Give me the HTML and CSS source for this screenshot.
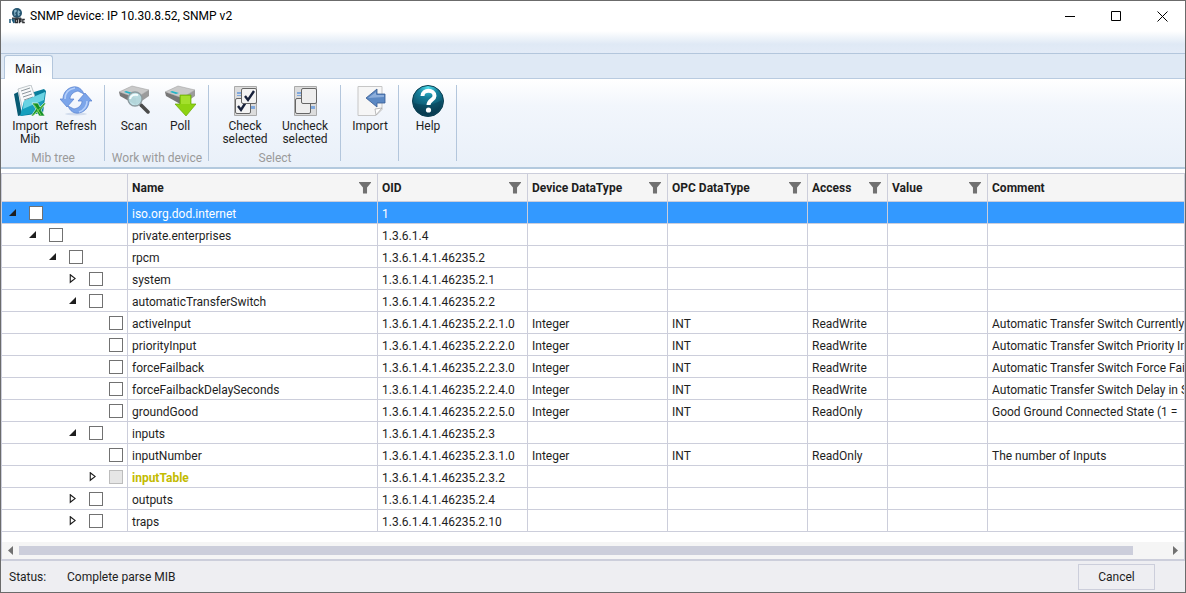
FILE: index.html
```html
<!DOCTYPE html>
<html lang="en">
<head>
  <meta charset="UTF-8">
  <meta name="viewport" content="width=device-width, initial-scale=1.0">
  <title>SNMP device</title>
  <link rel="stylesheet" href="styles.css">
</head>
<body>
  <div class="window">
    <header class="titlebar">
      <svg class="app-icon" width="16" height="16" viewBox="0 0 16 16">
        <circle cx="8" cy="5" r="5" fill="#24546f"/>
        <path d="M5 2.500l2-1 1 1.500-2 2 1 2-1.500 1zM9 2l2.500 2-1.500 1.500 1 1.500-2 1-.5-3z" fill="#86b3c7"/>
        <path d="M3 9.500h9l1 2H3z" fill="#3c444b"/>
        <path d="M1 11v4M3 11l2 4V11" fill="none" stroke="#1d5878" stroke-width="1.500"/>
        <path d="M6.500 11.500h2v3h-2zM10.500 15.200v-3.700h1.500v2h-1.500M15.800 11.500h-2v3h2" fill="none" stroke="#2c2f33" stroke-width="1.300"/>
      </svg>
      <h1>SNMP device: IP 10.30.8.52, SNMP v2</h1>
      <div class="window-buttons">
        <button aria-label="Minimize"><svg width="11" height="11"><path d="M0 5.500h10" stroke="#000"/></svg></button>
        <button aria-label="Maximize"><svg width="11" height="11"><path d="M.5 .5h9v9h-9z" fill="none" stroke="#000"/></svg></button>
        <button aria-label="Close"><svg width="11" height="11"><path d="M.5 .5l10 10M10.500 .5l-10 10" stroke="#000"/></svg></button>
      </div>
    </header>
    <div class="quickbar"></div>
    <nav class="tabs">
      <button class="tab">Main</button>
    </nav>

    <div class="ribbon">
      <section class="group">
        <div class="tools">
          <button class="tool">
            <svg width="32" height="32" viewBox="0 0 32 32">
              <path d="M0 9l4-2 4 23-4 1z" fill="#075a73"/>
              <path d="M10 10l20-6 2 2-3 22-22 3z" fill="#087e9c"/>
              <path d="M4 4L17 0l6 17-14 9z" fill="#f7f9fa" stroke="#9aa4aa" stroke-width=".6"/>
              <path d="M7 6l9-3M8 9l9-3M9 12l9-3M10 15l9-3M11 18l7-2" stroke="#7f8a91" stroke-width=".9"/>
              <path d="M10 16l21-9-3 19-22 5z" fill="#159fbd"/>
              <path d="M10 16l21-9-1 8-21 9z" fill="#69d3e3"/>
              <path d="M18 18h6l2 4 4-4h2l-5 7 4 6h-6l-2-4-4 4h-2l5-7z" fill="#149026" stroke="#fff" stroke-width=".6"/>
              <path d="M20 19.500l7 10.500M30 19.500L19 30.500" stroke="#7fd65a" stroke-width="1"/>
            </svg>
            <span>Import Mib</span>
          </button>
          <button class="tool">
            <svg width="32" height="32" viewBox="0 0 32 32">
              <ellipse cx="16" cy="29" rx="11" ry="1.500" fill="#d3dded"/>
              <path d="M13 2C7 3 3 8 3 14H0l7 8 7-8h-4c0-4 3-7 8-8l6 3c-2-5-6-8-11-7z" fill="#7ba5ea" stroke="#5680cf" stroke-width=".7"/>
              <path d="M19 28c6-1 10-6 10-12h3l-7-8-7 8h4c0 4-3 7-8 8l-6-3c2 5 6 8 11 7z" fill="#7ba5ea" stroke="#5680cf" stroke-width=".7"/>
              <path d="M5 14c0-6 4-10 10-11M27 16c0 5-3 9-8 11" fill="none" stroke="#b5cffa" stroke-width="1.500"/>
            </svg>
            <span>Refresh</span>
          </button>
        </div>
        <h2>Mib tree</h2>
      </section>

      <section class="group">
        <div class="tools">
          <button class="tool">
            <svg width="32" height="32" viewBox="0 0 32 32">
              <path d="M1 7L14 1l17 4-13 8z" fill="#c9c9c9" stroke="#999" stroke-width=".5"/>
              <path d="M1 7l17 6v7L2 11z" fill="#777"/>
              <path d="M18 13l13-8v6l-13 9z" fill="#9b9b9b"/>
              <path d="M8 6l7 2-3 1-6-2z" fill="#20b4c8"/>
              <path d="M23 20l7 7" stroke="#4b4b4b" stroke-width="3.500" stroke-linecap="round"/>
              <circle cx="17" cy="14" r="7" fill="#b9dfe4" fill-opacity=".9" stroke="#8d9ba0" stroke-width="1.300"/>
              <path d="M12 14c1-4 4-5 8-4" fill="none" stroke="#f4fcfd" stroke-width="2"/>
            </svg>
            <span>Scan</span>
          </button>
          <button class="tool">
            <svg width="32" height="32" viewBox="0 0 32 32">
              <path d="M1 7L14 1l17 4-13 8z" fill="#c9c9c9" stroke="#999" stroke-width=".5"/>
              <path d="M1 7l17 6v7L2 11z" fill="#777"/>
              <path d="M18 13l13-8v6l-13 9z" fill="#9b9b9b"/>
              <path d="M8 6l7 2-3 1-6-2z" fill="#20b4c8"/>
              <path d="M16 10h11v9h5L22 31 11 19h5z" fill="#8ed312" stroke="#67a806" stroke-width=".7"/>
              <path d="M17 11h9v8h-9z" fill="#a3e02c"/>
            </svg>
            <span>Poll</span>
          </button>
        </div>
        <h2>Work with device</h2>
      </section>

      <section class="group">
        <div class="tools">
          <button class="tool wide">
            <svg width="32" height="32" viewBox="0 0 32 32">
              <path d="M5.500 1.500h22v29h-22z" fill="#dcdcdc" stroke="#aaa"/>
              <path d="M8 7h4v2H8zM8 10h4v1H8zM22 21h4v3h-4z" fill="#7fa8de"/>
              <rect x="6.500" y="13.500" width="15" height="15" rx="1.500" fill="#f3f3f3" stroke="#666"/>
              <path d="M9 21l3 4 5-8" fill="none" stroke="#17213b" stroke-width="2.400"/>
              <rect x="12.500" y="3.500" width="15" height="15" rx="1.500" fill="#f3f3f3" stroke="#666"/>
              <path d="M16 11l3 4 6-9" fill="none" stroke="#17213b" stroke-width="2.400"/>
            </svg>
            <span>Check selected</span>
          </button>
          <button class="tool wide">
            <svg width="32" height="32" viewBox="0 0 32 32">
              <path d="M5.500 1.500h22v29h-22z" fill="#dcdcdc" stroke="#aaa"/>
              <path d="M8 7h4v2H8zM8 10h4v1H8zM22 21h4v3h-4z" fill="#7fa8de"/>
              <rect x="6.500" y="13.500" width="15" height="15" rx="1.500" fill="#eee" stroke="#666"/>
              <rect x="12.500" y="3.500" width="15" height="15" rx="1.500" fill="#eee" stroke="#666"/>
            </svg>
            <span>Uncheck selected</span>
          </button>
        </div>
        <h2>Select</h2>
      </section>

      <section class="group">
        <div class="tools">
          <button class="tool">
            <svg width="32" height="32" viewBox="0 0 32 32">
              <path d="M4 1.500h24v23l-6 6H4z" fill="#f6f6f6" stroke="#c6c6c6"/>
              <path d="M28 23l-6 7-1-6z" fill="#fff" stroke="#aaa" stroke-width=".8"/>
              <path d="M12 13l11-9v5h8v9h-8v4z" fill="#5b88c3" stroke="#365a92" stroke-width=".8"/>
              <path d="M14 13l8-6v3h8v2z" fill="#8daedb"/>
            </svg>
            <span>Import</span>
          </button>
        </div>
      </section>

      <section class="group">
        <div class="tools">
          <button class="tool">
            <svg width="32" height="32" viewBox="0 0 32 32">
              <defs>
                <radialGradient id="ball" cx=".5" cy=".05" r=".85">
                  <stop offset="0" stop-color="#4fe0ee"/>
                  <stop offset=".4" stop-color="#157f9b"/>
                  <stop offset="1" stop-color="#0a4258"/>
                </radialGradient>
              </defs>
              <circle cx="16" cy="16" r="15.500" fill="url(#ball)" stroke="#0b3e50"/>
              <path d="M2 18c9 3 20 2 28-3 0 19-27 20-28 3z" fill="#063044" fill-opacity=".35"/>
              <path d="M10.500 11c0-7 12-7 12 0 0 4-6 4-6 9" fill="none" stroke="#fff" stroke-width="4"/>
              <circle cx="16.500" cy="25" r="2.600" fill="#fff"/>
            </svg>
            <span>Help</span>
          </button>
        </div>
      </section>
    </div>

    <main class="grid">
      <table>
        <colgroup>
          <col class="col-tree"><col class="col-name"><col class="col-oid"><col class="col-type"><col class="col-type"><col class="col-access"><col class="col-value"><col>
        </colgroup>
        <thead>
          <tr>
            <th></th>
            <th><div class="head">Name<button class="filter" aria-label="Filter name"></button></div></th>
            <th><div class="head">OID<button class="filter" aria-label="Filter OID"></button></div></th>
            <th><div class="head">Device DataType<button class="filter" aria-label="Filter device type"></button></div></th>
            <th><div class="head">OPC DataType<button class="filter" aria-label="Filter OPC type"></button></div></th>
            <th><div class="head">Access<button class="filter" aria-label="Filter access"></button></div></th>
            <th><div class="head">Value<button class="filter" aria-label="Filter value"></button></div></th>
            <th><div class="head">Comment</div></th>
          </tr>
        </thead>
        <tbody>
          <tr class="selected">
            <td><div class="node level-0"><button class="arrow open" aria-label="Collapse"></button><input type="checkbox" aria-label="iso.org.dod.internet"></div></td>
            <td>iso.org.dod.internet</td><td>1</td><td></td><td></td><td></td><td></td><td></td>
          </tr>
          <tr>
            <td><div class="node level-1"><button class="arrow open" aria-label="Collapse"></button><input type="checkbox" aria-label="private.enterprises"></div></td>
            <td>private.enterprises</td><td>1.3.6.1.4</td><td></td><td></td><td></td><td></td><td></td>
          </tr>
          <tr>
            <td><div class="node level-2"><button class="arrow open" aria-label="Collapse"></button><input type="checkbox" aria-label="rpcm"></div></td>
            <td>rpcm</td><td>1.3.6.1.4.1.46235.2</td><td></td><td></td><td></td><td></td><td></td>
          </tr>
          <tr>
            <td><div class="node level-3"><button class="arrow" aria-label="Expand"></button><input type="checkbox" aria-label="system"></div></td>
            <td>system</td><td>1.3.6.1.4.1.46235.2.1</td><td></td><td></td><td></td><td></td><td></td>
          </tr>
          <tr>
            <td><div class="node level-3"><button class="arrow open" aria-label="Collapse"></button><input type="checkbox" aria-label="automaticTransferSwitch"></div></td>
            <td>automaticTransferSwitch</td><td>1.3.6.1.4.1.46235.2.2</td><td></td><td></td><td></td><td></td><td></td>
          </tr>
          <tr>
            <td><div class="node level-4"><input type="checkbox" aria-label="activeInput"></div></td>
            <td>activeInput</td><td>1.3.6.1.4.1.46235.2.2.1.0</td><td>Integer</td><td>INT</td><td>ReadWrite</td><td></td><td>Automatic Transfer Switch Currently</td>
          </tr>
          <tr>
            <td><div class="node level-4"><input type="checkbox" aria-label="priorityInput"></div></td>
            <td>priorityInput</td><td>1.3.6.1.4.1.46235.2.2.2.0</td><td>Integer</td><td>INT</td><td>ReadWrite</td><td></td><td>Automatic Transfer Switch Priority In</td>
          </tr>
          <tr>
            <td><div class="node level-4"><input type="checkbox" aria-label="forceFailback"></div></td>
            <td>forceFailback</td><td>1.3.6.1.4.1.46235.2.2.3.0</td><td>Integer</td><td>INT</td><td>ReadWrite</td><td></td><td>Automatic Transfer Switch Force Failb</td>
          </tr>
          <tr>
            <td><div class="node level-4"><input type="checkbox" aria-label="forceFailbackDelaySeconds"></div></td>
            <td>forceFailbackDelaySeconds</td><td>1.3.6.1.4.1.46235.2.2.4.0</td><td>Integer</td><td>INT</td><td>ReadWrite</td><td></td><td>Automatic Transfer Switch Delay in S</td>
          </tr>
          <tr>
            <td><div class="node level-4"><input type="checkbox" aria-label="groundGood"></div></td>
            <td>groundGood</td><td>1.3.6.1.4.1.46235.2.2.5.0</td><td>Integer</td><td>INT</td><td>ReadOnly</td><td></td><td>Good Ground Connected State (1 =</td>
          </tr>
          <tr>
            <td><div class="node level-3"><button class="arrow open" aria-label="Collapse"></button><input type="checkbox" aria-label="inputs"></div></td>
            <td>inputs</td><td>1.3.6.1.4.1.46235.2.3</td><td></td><td></td><td></td><td></td><td></td>
          </tr>
          <tr>
            <td><div class="node level-4"><input type="checkbox" aria-label="inputNumber"></div></td>
            <td>inputNumber</td><td>1.3.6.1.4.1.46235.2.3.1.0</td><td>Integer</td><td>INT</td><td>ReadOnly</td><td></td><td>The number of Inputs</td>
          </tr>
          <tr>
            <td><div class="node level-4"><button class="arrow" aria-label="Expand"></button><input type="checkbox" aria-label="inputTable" disabled></div></td>
            <td class="table-node">inputTable</td><td>1.3.6.1.4.1.46235.2.3.2</td><td></td><td></td><td></td><td></td><td></td>
          </tr>
          <tr>
            <td><div class="node level-3"><button class="arrow" aria-label="Expand"></button><input type="checkbox" aria-label="outputs"></div></td>
            <td>outputs</td><td>1.3.6.1.4.1.46235.2.4</td><td></td><td></td><td></td><td></td><td></td>
          </tr>
          <tr>
            <td><div class="node level-3"><button class="arrow" aria-label="Expand"></button><input type="checkbox" aria-label="traps"></div></td>
            <td>traps</td><td>1.3.6.1.4.1.46235.2.10</td><td></td><td></td><td></td><td></td><td></td>
          </tr>
        </tbody>
      </table>
      <div class="scrollbar">
        <button class="scroll-left" aria-label="Scroll left"></button>
        <div class="track"><div class="thumb"></div></div>
        <button class="scroll-right" aria-label="Scroll right"></button>
      </div>
    </main>

    <footer class="status">
      <span class="status-label">Status:</span>
      <span>Complete parse MIB</span>
      <button class="cancel">Cancel</button>
    </footer>
  </div>
</body>
</html>
```
FILE: styles.css
```css
* {
  box-sizing: border-box;
}

body {
  margin: 0;
  font-family: Roboto, "Open Sans", sans-serif;
  font-size: 12px;
  line-height: 16px;
  color: #1e1e1e;
}

button {
  font: inherit;
  color: inherit;
  background: none;
  border: none;
  padding: 0;
}

.window {
  min-height: 100vh;
  display: flex;
  flex-direction: column;
  border: 1px solid #6b6b6b;
  background: #fff;
}

/* title bar */
.titlebar {
  display: flex;
  align-items: center;
  height: 30px;
  padding-left: 8px;
  color: #000;
}

.titlebar h1 {
  margin: 0 0 0 5px;
  font-size: 12px;
  font-weight: normal;
}

.window-buttons {
  display: flex;
  margin-left: auto;
}

.window-buttons button {
  width: 46px;
  height: 28px;
}

.window-buttons svg {
  display: block;
  margin: auto;
}

.quickbar {
  height: 23px;
  background: linear-gradient(#fff, #dfe9f5 60%, #e3ebf7);
  border-bottom: 1px solid #b3c6dc;
}

.tabs {
  display: flex;
  align-items: flex-end;
  height: 25px;
  padding-left: 3px;
  background: #dfe9f5;
  border-bottom: 1px solid #b9cbe0;
}

.tab {
  height: 24px;
  margin-bottom: -1px;
  padding: 2px 10px 0;
  border: 1px solid #b3c6dc;
  border-bottom: none;
  border-radius: 3px 3px 0 0;
  background: linear-gradient(#f3f8fd, #fff);
}

/* ribbon */
.ribbon {
  display: flex;
  height: 90px;
  padding: 6px 0;
  background: linear-gradient(#fff, #f2f6fc 30%, #e9f0f9);
  border-bottom: 2px solid #b3c9de;
}

.group {
  display: flex;
  flex-direction: column;
  justify-content: space-between;
  padding: 0 5px 0 6px;
  border-right: 1px solid #b3c6dc;
}

.group h2 {
  margin: 0;
  font-size: 12px;
  line-height: 6px;
  font-weight: normal;
  text-align: center;
  color: #9a9a9a;
  white-space: nowrap;
}

.tools {
  display: flex;
  justify-content: center;
}

.tool {
  display: flex;
  flex-direction: column;
  align-items: center;
  gap: 3px;
  width: 46px;
  line-height: 13px;
}

.tool.wide {
  width: 60px;
}

/* tree grid */
.grid {
  flex: 1;
  display: flex;
  flex-direction: column;
  margin-top: 4px;
  border: 1px solid #cccedb;
  border-bottom-width: 2px;
}

table {
  width: 100%;
  table-layout: fixed;
  border-collapse: separate;
  border-spacing: 0;
}

.col-tree { width: 126px; }
.col-name { width: 250px; }
.col-oid { width: 150px; }
.col-type { width: 140px; }
.col-access { width: 80px; }
.col-value { width: 100px; }

th,
td {
  height: 22px;
  padding: 2px 0 0 4px;
  border-right: 1px solid #cccedb;
  border-bottom: 1px solid #cccedb;
  overflow: hidden;
  white-space: nowrap;
  text-align: left;
  line-height: 16px;
}

td:first-child {
  padding-top: 0;
}

th:last-child,
td:last-child {
  border-right: none;
}

th {
  height: 28px;
  padding-top: 0;
  background: #f5f5f5;
}

.head {
  display: flex;
  align-items: center;
  justify-content: space-between;
  padding-right: 6px;
}

.filter {
  width: 12px;
  height: 12px;
  background: #717171;
  clip-path: polygon(0 0, 100% 0, 100% 10%, 67% 50%, 67% 100%, 33% 100%, 33% 50%, 0 10%);
}

.selected td {
  background: #3399ff;
  color: #fff;
}

.node {
  display: flex;
  align-items: center;
  justify-content: flex-end;
  height: 16px;
}

.level-0 { width: 37px; }
.level-1 { width: 57px; }
.level-2 { width: 77px; }
.level-3 { width: 97px; }
.level-4 { width: 117px; }

.node input {
  appearance: none;
  width: 14px;
  height: 14px;
  margin: 0;
  border: 1px solid #717171;
  background: #fff;
}

.node input:disabled {
  background: #e6e6e6;
  border-color: #bcbcbc;
}

.arrow {
  width: 7px;
  height: 10px;
  margin-right: 13px;
  background: #1e1e1e;
  clip-path: polygon(evenodd, 10% 0, 100% 50%, 10% 100%, 10% 0, 26% 25%, 26% 75%, 76% 50%, 26% 25%);
}

.arrow.open {
  height: 7px;
  clip-path: polygon(100% 0, 100% 100%, 0 100%);
}

.table-node {
  font-weight: bold;
  color: #c3bb00;
}

.scrollbar {
  display: flex;
  align-items: center;
  height: 17px;
  margin-top: auto;
  background: #f5f5f5;
}

.track {
  flex: 1;
}

.thumb {
  width: 97%;
  height: 9px;
  background: #cccedb;
}

.scroll-left,
.scroll-right {
  width: 5px;
  height: 9px;
  margin: 0 6px;
  background: #717171;
  clip-path: polygon(100% 0, 100% 100%, 0 50%);
}

.scroll-right {
  clip-path: polygon(0 0, 100% 50%, 0 100%);
}

/* status bar */
.status {
  display: flex;
  align-items: center;
  height: 31px;
  padding: 0 30px 0 8px;
  background: #eeeef2;
}

.status-label {
  width: 58px;
}

.cancel {
  width: 77px;
  height: 26px;
  margin-left: auto;
  border: 1px solid #cccedb;
}
```
